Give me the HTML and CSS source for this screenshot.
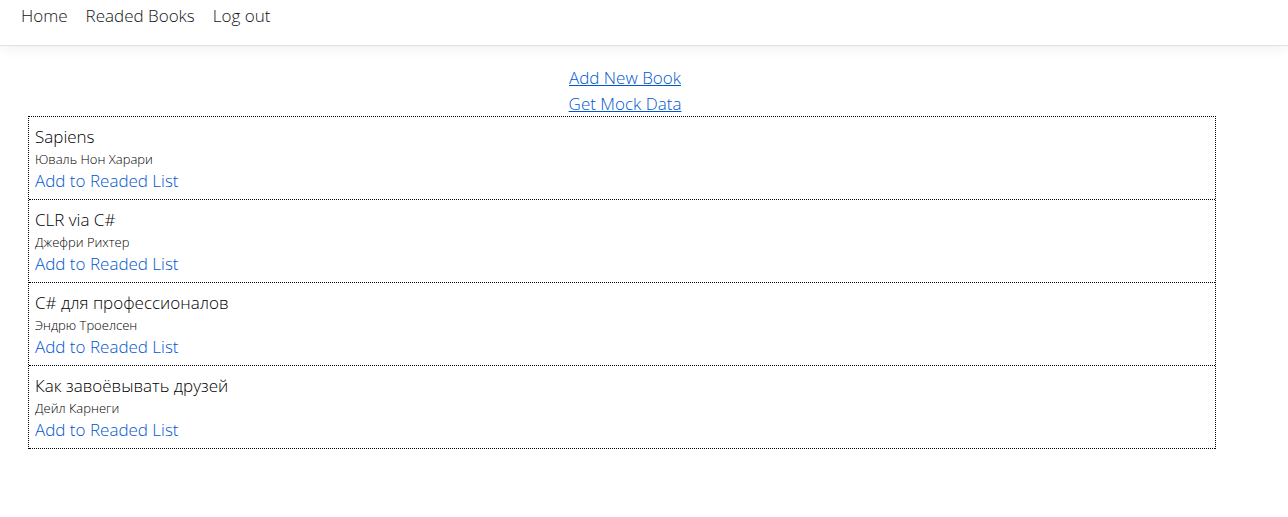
FILE: index.html
```html
<!DOCTYPE html>
<html lang="en">
<head>
<meta charset="utf-8">
<title>Books</title>
<link rel="stylesheet" href="styles.css">
</head>
<body>
<header class="site-header">
  <nav class="nav">
    <a class="nav-link" href="#">Home</a>
    <a class="nav-link" href="#">Readed Books</a>
    <a class="nav-link" href="#">Log out</a>
  </nav>
</header>
<main class="content">
  <div class="actions">
    <a class="action" href="#">Add New Book</a>
    <a class="action" href="#">Get Mock Data</a>
  </div>
  <ul class="books">
    <li class="book">
      <div class="title">Sapiens</div>
      <div class="author">Юваль Нон Харари</div>
      <a class="add" href="#">Add to Readed List</a>
    </li>
    <li class="book">
      <div class="title">CLR via C#</div>
      <div class="author">Джефри Рихтер</div>
      <a class="add" href="#">Add to Readed List</a>
    </li>
    <li class="book">
      <div class="title">C# для профессионалов</div>
      <div class="author">Эндрю Троелсен</div>
      <a class="add" href="#">Add to Readed List</a>
    </li>
    <li class="book">
      <div class="title">Как завоёвывать друзей</div>
      <div class="author">Дейл Карнеги</div>
      <a class="add" href="#">Add to Readed List</a>
    </li>
  </ul>
</main>
</body>
</html>
```
FILE: styles.css
```css
* {
  box-sizing: border-box;
}

body {
  margin: 0;
  background: #fff;
  color: #000;
  font-family: "Segoe UI", "Open Sans", "Noto Sans", sans-serif;
  font-size: 17px;
  font-weight: 300;
  line-height: 26px;
}

.site-header {
  padding: 3px 21px 16px;
  border-bottom: 1px solid #dee2e6;
  box-shadow: 0 4px 12px rgba(0, 0, 0, 0.05);
}

.nav {
  display: flex;
  gap: 18px;
}

.nav-link {
  color: #111518;
  text-decoration: none;
}

.content {
  padding: 19px 72px 0 28px;
}

.actions {
  display: flex;
  flex-direction: column;
  align-items: center;
  padding-left: 6px;
}

.action {
  color: #0057d0;
}

.action:last-child {
  line-height: 25px;
}

.books {
  margin: 0;
  padding: 0;
  list-style: none;
  border: 1px dotted #000;
  border-bottom: 0;
}

.book {
  padding: 7px 6px 6px;
  border-bottom: 1px dotted #000;
}

.author {
  font-size: 13px;
  line-height: 19px;
}

.add {
  display: block;
  width: fit-content;
  line-height: 24px;
  color: #0057d0;
  text-decoration: none;
}
```
